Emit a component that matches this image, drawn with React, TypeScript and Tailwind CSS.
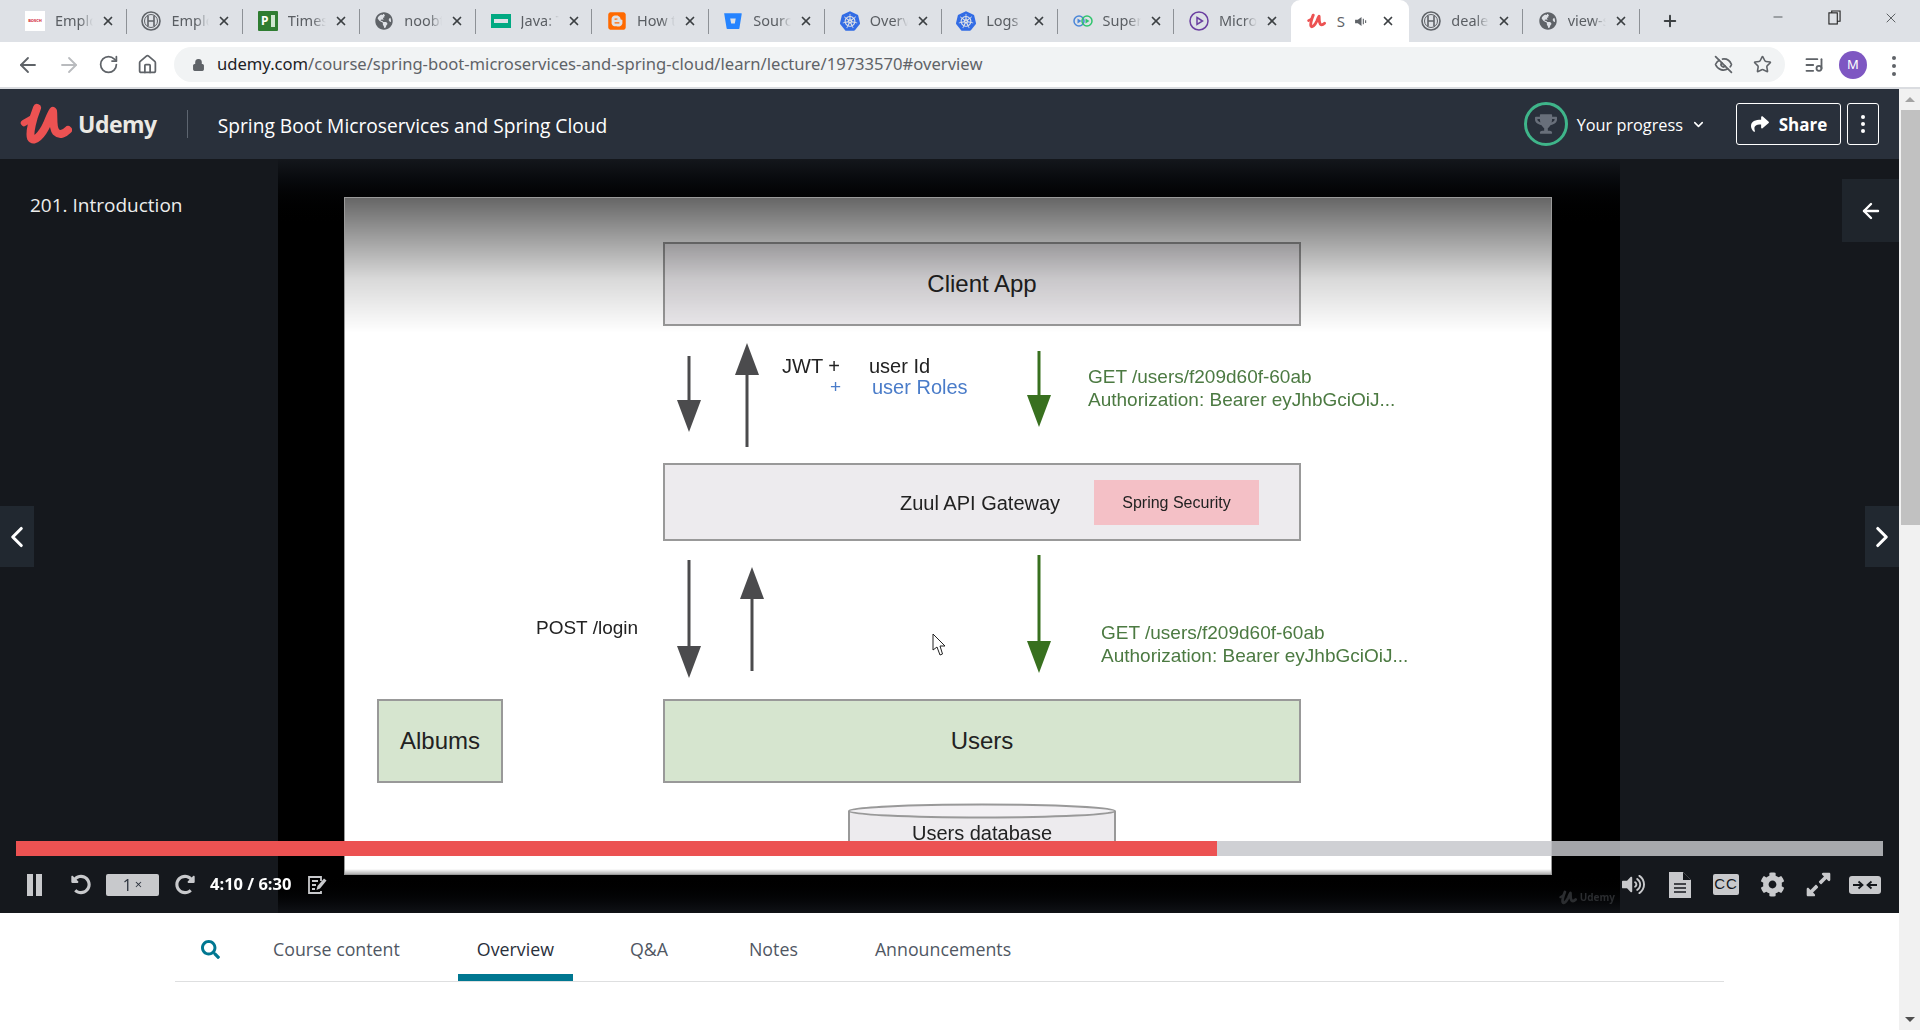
import type { ReactNode } from "react";
import { ArrowLeft, ArrowRight, ChevronDown, ChevronLeft, ChevronRight, EyeOff, Home, ListMusic, Lock, Minus, Plus, RotateCw, Star, X } from "lucide-react";
import { FaBitbucket, FaBlogger, FaCog, FaExpandAlt, FaGlobeAmericas, FaRedoAlt, FaSearch, FaShare, FaTrophy, FaUndoAlt, FaVolumeUp } from "react-icons/fa";
import { SiKubernetes } from "react-icons/si";

const UdemyMark = ({ className }: { className: string }) => (
  <svg viewBox="0 0 52 42" className={className} fill="none" stroke="currentColor" strokeLinecap="round" strokeLinejoin="round">
    <path d="M4 20 L11 16" strokeWidth="6.5" />
    <path d="M17 5 C13 15 9 30 11 35 C14 40 22 32 27 21 C29 16 31 11 33 8 C34 14 32 24 36 29 C40 33 45 30 48 27" strokeWidth="8" />
  </svg>
);

const BoschIcon = () => (
  <svg viewBox="0 0 20 20" className="w-5 h-5" fill="none" stroke="#5f6368">
    <circle cx="10" cy="10" r="9" strokeWidth="1.6" />
    <circle cx="10" cy="10" r="6.5" strokeWidth="1" />
    <path d="M7 4.5 V15.5 M13 4.5 V15.5 M7 10 H13" strokeWidth="1.6" />
  </svg>
);

const tabs: { title: string; icon: ReactNode; active?: boolean }[] = [
  {
    title: "Employee",
    icon: (
      <div className="w-5 h-5 bg-white flex items-center justify-center">
        <span className="text-[#d0202e] text-[4px] font-bold leading-none">BOSCH</span>
      </div>
    ),
  },
  { title: "Employee", icon: <BoschIcon /> },
  {
    title: "Timesheet",
    icon: (
      <div className="w-5 h-5 bg-[#2f7d32] flex items-center justify-center rounded-[1px]">
        <span className="text-white text-[12px] font-bold leading-none">P</span>
        <span className="w-1 h-3 bg-[#cfe6d0] ml-[2px]" />
      </div>
    ),
  },
  { title: "noobtube", icon: <FaGlobeAmericas className="w-[18px] h-[18px] text-[#5f6368]" /> },
  {
    title: "Java: Top",
    icon: (
      <div className="w-5 h-[14px] bg-[#01a982] flex items-center justify-center">
        <span className="w-[14px] h-1 bg-[#dee1e6]" />
      </div>
    ),
  },
  { title: "How to", icon: <FaBlogger className="w-5 h-5 text-[#ff6a00]" /> },
  { title: "Source", icon: <FaBitbucket className="w-[18px] h-[18px] text-[#2684ff]" /> },
  { title: "Overview", icon: <SiKubernetes className="w-5 h-5 text-[#326ce5]" /> },
  { title: "Logs", icon: <SiKubernetes className="w-5 h-5 text-[#326ce5]" /> },
  {
    title: "Super",
    icon: (
      <svg viewBox="0 0 20 14" className="w-5 h-[14px]" fill="none" strokeWidth="1.5">
        <circle cx="6" cy="7" r="5" stroke="#4a86d8" />
        <circle cx="14" cy="7" r="5" stroke="#2fc46d" />
        <path d="M4.5 4.5 L8.5 7 L4.5 9.5 Z" fill="#4a86d8" stroke="none" />
        <path d="M12.5 4.5 L16.5 7 L12.5 9.5 Z" fill="#2fc46d" stroke="none" />
      </svg>
    ),
  },
  {
    title: "Micro",
    icon: (
      <svg viewBox="0 0 20 20" className="w-5 h-5" fill="none" stroke="#6b3fa0" strokeWidth="1.5">
        <circle cx="10" cy="10" r="9" />
        <path d="M8 6.5 L13.5 10 L8 13.5 Z" />
      </svg>
    ),
  },
  { title: "S", icon: <UdemyMark className="w-[19px] h-[16px] text-[#ec5252]" />, active: true },
  { title: "dealer", icon: <BoschIcon /> },
  { title: "view-source", icon: <FaGlobeAmericas className="w-[18px] h-[18px] text-[#5f6368]" /> },
];

const TabStrip = () => (
  <div className="h-[42px] bg-[#dee1e6] flex pl-[10.5px] shrink-0 font-['Noto_Sans',sans-serif]">
    {tabs.map((tab, i) => {
      const nextActive = tabs[i + 1]?.active;
      return (
        <div
          key={i}
          className={
            tab.active
              ? "relative w-[118px] -mr-[2px] h-[42px] bg-white rounded-t-[9px] flex items-center pl-[16px]"
              : "relative w-[116.4px] h-[42px] flex items-center pl-[14.5px]"
          }
        >
          <div className="w-5 h-5 flex items-center justify-center shrink-0">{tab.icon}</div>
          {tab.active ? (
            <>
              <span className="ml-[10px] text-[15px] text-[#5f6368] w-[12px] overflow-hidden">S</span>
              <svg viewBox="0 0 14 12" className="ml-[6px] w-[13px] h-[11px]" fill="#5f6368">
                <path d="M0 4 H3 L7 1 V11 L3 8 H0 Z" />
                <path d="M9 3 V9 M11.5 4.5 V7.5" stroke="#5f6368" strokeWidth="1.2" />
              </svg>
            </>
          ) : (
            <span className="ml-[10px] w-[38px] overflow-hidden whitespace-nowrap text-[14.5px] text-[#5a5e63] [mask-image:linear-gradient(to_right,black_65%,transparent)]">
              {tab.title}
            </span>
          )}
          <X className="absolute left-[90.5px] w-[14px] h-[14px] text-[#3c4043]" strokeWidth={3} />
          {!tab.active && !nextActive && <div className="absolute right-0 top-[9px] w-[1px] h-[25px] bg-[#8d9196]" />}
        </div>
      );
    })}
    <Plus className="ml-[21px] mt-[12px] w-[18px] h-[18px] text-[#3c4043]" strokeWidth={2.6} />
    <div className="ml-auto flex items-start pt-[10px] text-[#3c4043]">
      <Minus className="w-[14px] h-[14px]" strokeWidth={1.4} />
      <svg viewBox="0 0 14 16" className="ml-[43px] w-[13px] h-[15px]" fill="none" stroke="#222" strokeWidth="1.2">
        <rect x="1" y="3" width="9" height="12" />
        <path d="M4 3 V1 H13 V12 H10" />
      </svg>
      <X className="ml-[42px] mr-[21px] w-[16px] h-[16px]" strokeWidth={1.2} />
    </div>
  </div>
);

const Toolbar = () => (
  <div className="h-[47px] bg-white border-b-2 border-[#dadce0] flex items-start shrink-0 font-['Noto_Sans',sans-serif]">
    <div className="flex items-center h-[45px] pl-[16px] gap-[17px] text-[#5f6368]">
      <ArrowLeft className="w-[24px] h-[24px]" strokeWidth={1.8} />
      <ArrowRight className="w-[24px] h-[24px] text-[#b9bbbe]" strokeWidth={1.8} />
      <RotateCw className="w-[21px] h-[21px]" strokeWidth={2} />
      <Home className="w-[21px] h-[21px] ml-[1px]" strokeWidth={2} />
    </div>
    <div className="ml-[16px] mt-[5px] w-[1611px] h-[35px] bg-[#f1f3f4] rounded-full flex items-center pl-[18px] pr-[13px]">
      <Lock className="w-[13px] h-[14px] text-[#5f6368] fill-[#5f6368]" />
      <span className="ml-[12px] text-[16.6px] whitespace-nowrap text-[#5f6368]">
        <span className="text-[#202124]">udemy.com</span>/course/spring-boot-microservices-and-spring-cloud/learn/lecture/19733570#overview
      </span>
      <EyeOff className="ml-auto w-[19px] h-[19px] text-[#5f6368]" strokeWidth={2.2} />
      <Star className="ml-[20px] w-[19px] h-[19px] text-[#5f6368]" strokeWidth={2} />
    </div>
    <ListMusic className="ml-[19px] mt-[13px] w-[20px] h-[20px] text-[#5f6368]" strokeWidth={2.2} />
    <div className="ml-[15px] mt-[9px] w-[28px] h-[28px] rounded-full bg-[#7e57c2] flex items-center justify-center text-white text-[13px]">M</div>
    <div className="ml-[25px] mt-[14px] flex flex-col gap-[4px]">
      <span className="w-[4px] h-[4px] rounded-full bg-[#5f6368]" />
      <span className="w-[4px] h-[4px] rounded-full bg-[#5f6368]" />
      <span className="w-[4px] h-[4px] rounded-full bg-[#5f6368]" />
    </div>
  </div>
);

const CourseHeader = () => (
  <div className="h-[70px] bg-[#29303b] flex items-center shrink-0 pl-[20px] pr-[20px]">
    <UdemyMark className="w-[52px] h-[42px] text-[#ec5252]" />
    <span className="ml-[6px] text-[23px] font-bold text-[#ebe9e4] tracking-[-0.5px]">Udemy</span>
    <div className="ml-[30px] w-[1px] h-[28px] bg-[#5d6570]" />
    <span className="ml-[30px] mt-[4px] text-[19.2px] text-white whitespace-nowrap">Spring Boot Microservices and Spring Cloud</span>
    <div className="ml-auto w-[44px] h-[44px] rounded-full border-[3px] border-[#3fb58a] flex items-center justify-center">
      <FaTrophy className="w-[22px] h-[22px] text-[#686f7a]" />
    </div>
    <span className="ml-[9px] mt-[3px] text-[16.3px] text-white whitespace-nowrap">Your progress</span>
    <ChevronDown className="ml-[8px] w-[15px] h-[15px] text-white" strokeWidth={2.5} />
    <div className="ml-[30px] w-[105px] h-[42px] border border-white rounded-[3px] flex items-center justify-center gap-[9px] text-white">
      <FaShare className="w-[20px] h-[18px]" />
      <span className="text-[17px] font-bold mt-[1px]">Share</span>
    </div>
    <div className="ml-[6px] w-[32px] h-[42px] border border-white rounded-[3px] flex flex-col items-center justify-center gap-[3px]">
      <span className="w-[4px] h-[4px] bg-white rounded-full" />
      <span className="w-[4px] h-[4px] bg-white rounded-full" />
      <span className="w-[4px] h-[4px] bg-white rounded-full" />
    </div>
  </div>
);

const Arrow = ({ className, len, color, up }: { className: string; len: number; color: string; up?: boolean }) => (
  <svg width="24" height={len} viewBox={`0 0 24 ${len}`} className={`absolute ${className}`}>
    {up ? (
      <>
        <path d={`M10.5 28 H13.5 V${len} H10.5 Z`} fill={color} />
        <path d="M12 0 L24 32 H0 Z" fill={color} />
      </>
    ) : (
      <>
        <path d={`M10.5 0 H13.5 V${len - 28} H10.5 Z`} fill={color} />
        <path d={`M12 ${len} L24 ${len - 32} H0 Z`} fill={color} />
      </>
    )}
  </svg>
);

const Slide = () => (
  <div className="relative -ml-[2px] w-[1208px] h-[678px] bg-white border border-[#9a9a9a] font-['Liberation_Sans',sans-serif] text-[#222] overflow-hidden">
    <div className="absolute inset-0 blur-[0.6px]">
      <div className="absolute left-[318px] top-[44px] w-[638px] h-[84px] bg-[#edebee] border-2 border-[#999] flex items-center justify-center text-[24px]">Client App</div>
      <Arrow className="left-[332px] top-[158px]" len={76} color="#4b4b4d" />
      <Arrow className="left-[390px] top-[145px]" len={104} color="#4b4b4d" up />
      <Arrow className="left-[682px] top-[153px]" len={76} color="#38701f" />
      <span className="absolute left-[437px] top-[156px] leading-[24px] text-[20px]">JWT +</span>
      <span className="absolute left-[524px] top-[156px] leading-[24px] text-[20px]">user Id</span>
      <span className="absolute left-[485px] top-[177px] leading-[24px] text-[19px] text-[#4a7cc9]">+</span>
      <span className="absolute left-[527px] top-[177px] leading-[24px] text-[20px] text-[#4a7cc9]">user Roles</span>
      <span className="absolute left-[743px] top-[167px] leading-[24px] text-[19px] text-[#4c7a42] whitespace-nowrap">GET /users/f209d60f-60ab</span>
      <span className="absolute left-[743px] top-[190px] leading-[24px] text-[19px] text-[#4c7a42] whitespace-nowrap">Authorization: Bearer eyJhbGciOiJ...</span>

      <div className="absolute left-[318px] top-[265px] w-[638px] h-[78px] bg-[#edebee] border-2 border-[#999]" />
      <span className="absolute left-[555px] top-[293px] leading-[24px] text-[20px] whitespace-nowrap">Zuul API Gateway</span>
      <div className="absolute left-[749px] top-[282px] w-[165px] h-[45px] bg-[#f4c0c6] flex items-center justify-center text-[16px]">Spring Security</div>

      <Arrow className="left-[332px] top-[362px]" len={118} color="#4b4b4d" />
      <Arrow className="left-[395px] top-[369px]" len={104} color="#4b4b4d" up />
      <Arrow className="left-[682px] top-[357px]" len={118} color="#38701f" />
      <span className="absolute left-[191px] top-[418px] leading-[24px] text-[19px] whitespace-nowrap">POST /login</span>
      <span className="absolute left-[756px] top-[423px] leading-[24px] text-[19px] text-[#4c7a42] whitespace-nowrap">GET /users/f209d60f-60ab</span>
      <span className="absolute left-[756px] top-[446px] leading-[24px] text-[19px] text-[#4c7a42] whitespace-nowrap">Authorization: Bearer eyJhbGciOiJ...</span>

      <div className="absolute left-[32px] top-[501px] w-[126px] h-[84px] bg-[#d6e5cf] border-2 border-[#999] flex items-center justify-center text-[24px]">Albums</div>
      <div className="absolute left-[318px] top-[501px] w-[638px] h-[84px] bg-[#d6e5cf] border-2 border-[#999] flex items-center justify-center text-[24px]">Users</div>

      <svg viewBox="0 0 268 48" className="absolute left-[503px] top-[605px] w-[268px] h-[48px]" fill="#edebee" stroke="#999" strokeWidth="2">
        <path d="M1 8 V48 H267 V8" />
        <ellipse cx="134" cy="8" rx="133" ry="6.5" fill="#f3f1f4" />
      </svg>
      <span className="absolute left-[503px] top-[623px] w-[268px] text-center leading-[24px] text-[20px]">Users database</span>
    </div>
    <svg viewBox="0 0 14 24" className="absolute left-[587px] top-[435px] w-[14px] h-[24px]" fill="#fff" stroke="#222" strokeWidth="1">
      <path d="M1 1 V17 L5 14 L8 22 L10.5 21 L8 13 H13 Z" />
    </svg>
    <div className="absolute inset-x-0 top-0 h-[135px] bg-linear-to-b from-black/60 via-black/15 via-60% to-transparent" />
    <div className="absolute inset-x-0 bottom-0 h-[5px] bg-linear-to-b from-transparent to-black/30" />
  </div>
);

const PlayerControls = () => (
  <div className="absolute inset-x-0 bottom-0 flex flex-col">
    <div className="mx-[16px] h-[15px] flex bg-[#c5c7cb]/[0.83]">
      <div className="w-[1201px] bg-[#ec5252]" />
    </div>
    <div className="h-[57px] flex items-center pl-[27px] pr-[18px] text-[#c8c9cc]">
      <div className="w-[15px] h-[22px] flex justify-between">
        <span className="w-[6px] bg-[#c8c9cc]" />
        <span className="w-[6px] bg-[#c8c9cc]" />
      </div>
      <FaUndoAlt className="ml-[29px] w-[20px] h-[21px]" />
      <div className="ml-[15px] w-[53px] h-[22px] bg-[#c8c9cc] rounded-[2px] flex items-center justify-center text-[#29303b] text-[16px] leading-none">
        1<span className="ml-[3px] text-[13px]">×</span>
      </div>
      <FaRedoAlt className="ml-[16px] w-[20px] h-[21px]" />
      <span className="ml-[15px] text-[16.5px] font-bold text-white whitespace-nowrap">4:10 / 6:30</span>
      <svg viewBox="0 0 20 20" className="ml-[16px] w-[20px] h-[20px]" fill="none" stroke="#c8c9cc" strokeWidth="1.8">
        <path d="M14 16 V18 H2 V2 H14 V6" />
        <path d="M5 6 H11 M5 10 H9 M5 14 H8" />
        <path d="M9.5 15 L10.5 11 L17 3.5 L19.5 5.5 L13 13.5 Z" fill="#c8c9cc" stroke="none" />
      </svg>
      <div className="ml-auto flex items-center">
        <FaVolumeUp className="w-[23px] h-[23px]" />
        <svg viewBox="0 0 23 26" className="ml-[23px] w-[23px] h-[26px]">
          <path d="M1 0 H15 L23 8 V26 H1 Z" fill="#c8c9cc" />
          <path d="M15 0 V8 H23" fill="#14171c" />
          <path d="M6 12 H18 M6 16 H18 M6 20 H18" stroke="#14171c" strokeWidth="1.6" />
        </svg>
        <div className="ml-[22px] w-[26px] h-[21px] bg-[#c8c9cc] rounded-[2px] flex items-center justify-center text-[#14171c] text-[15px] tracking-[1px] font-['Liberation_Sans',sans-serif]">CC</div>
        <FaCog className="ml-[21px] w-[25px] h-[25px]" />
        <FaExpandAlt className="ml-[20px] w-[27px] h-[27px]" />
        <div className="ml-[17px] w-[32px] h-[18px] bg-[#c8c9cc] rounded-[3px] flex items-center justify-center">
          <svg viewBox="0 0 28 12" className="w-[28px] h-[12px]" fill="none" stroke="#14171c" strokeWidth="1.8">
            <path d="M2 6 H11 M7.5 2.5 L11.5 6 L7.5 9.5 M26 6 H17 M20.5 2.5 L16.5 6 L20.5 9.5" />
          </svg>
        </div>
      </div>
    </div>
  </div>
);

const Video = () => (
  <div className="relative h-[754px] bg-[#15181d] flex justify-center shrink-0 overflow-hidden">
    <div className="relative w-[1342px] h-full bg-black flex justify-center pt-[38px] -ml-[1px]">
      <div className="absolute inset-x-0 top-0 h-[70px] bg-linear-to-b from-[#14171c] to-black" />
      <div className="absolute inset-x-0 bottom-0 h-[40px] bg-linear-to-b from-black to-[#101216]" />
      <Slide />
      <div className="absolute right-[5px] bottom-[8px] flex items-center gap-[3px] text-[#2b2d30] blur-[0.6px]">
        <UdemyMark className="w-[18px] h-[15px]" />
        <span className="text-[10px] font-bold">Udemy</span>
      </div>
    </div>
    <span className="absolute left-[30px] top-[32px] text-[19px] text-[#eceded] whitespace-nowrap">201. Introduction</span>
    <div className="absolute right-0 top-[20px] w-[57px] h-[63px] bg-[#1f252c] flex items-center justify-center">
      <ArrowLeft className="w-[24px] h-[24px] text-white" strokeWidth={2.4} />
    </div>
    <div className="absolute left-0 top-[347px] w-[34px] h-[61px] bg-[#212830] flex items-center justify-center">
      <ChevronLeft className="w-[34px] h-[34px] text-white" strokeWidth={2.2} />
    </div>
    <div className="absolute right-0 top-[347px] w-[34px] h-[61px] bg-[#212830] flex items-center justify-center">
      <ChevronRight className="w-[34px] h-[34px] text-white" strokeWidth={2.2} />
    </div>
    <PlayerControls />
  </div>
);

const LectureTabs = () => (
  <div className="ml-[175px] w-[1549px] h-[69px] border-b border-[#dedfe0] flex items-start text-[17.8px] leading-[26px] text-[#505763]">
    <div className="pl-[26px] w-[79px] h-full pt-[27px]">
      <FaSearch className="w-[19px] h-[19px] text-[#007791]" />
    </div>
    <div className="h-full px-[19px] pt-[23px]">Course content</div>
    <div className="ml-[39px] h-full px-[19px] pt-[23px] border-b-[7px] border-[#007791] text-[#29303b]">Overview</div>
    <div className="ml-[38px] h-full px-[19px] pt-[23px]">Q&amp;A</div>
    <div className="ml-[43px] h-full px-[19px] pt-[23px]">Notes</div>
    <div className="ml-[39px] h-full px-[19px] pt-[23px]">Announcements</div>
  </div>
);

const Scrollbar = () => (
  <div className="w-[21px] bg-[#f1f1f1] flex flex-col items-center shrink-0">
    <div className="h-[21px] flex items-center justify-center">
      <div className="w-0 h-0 border-x-[5px] border-x-transparent border-b-[5px] border-b-[#a3a3a3]" />
    </div>
    <div className="ml-[2px] w-[19px] h-[415px] bg-[#c1c1c1]" />
    <div className="mt-auto h-[21px] flex items-center justify-center">
      <div className="w-0 h-0 border-x-[5px] border-x-transparent border-t-[5px] border-t-[#505050]" />
    </div>
  </div>
);

export default function App() {
  return (
    <div className="w-[1920px] h-[1030px] overflow-hidden flex flex-col bg-white font-['Open_Sans',sans-serif]">
      <TabStrip />
      <Toolbar />
      <div className="flex flex-1 min-h-0">
        <div className="flex-1 min-w-0 flex flex-col">
          <CourseHeader />
          <Video />
          <LectureTabs />
        </div>
        <Scrollbar />
      </div>
    </div>
  );
}
